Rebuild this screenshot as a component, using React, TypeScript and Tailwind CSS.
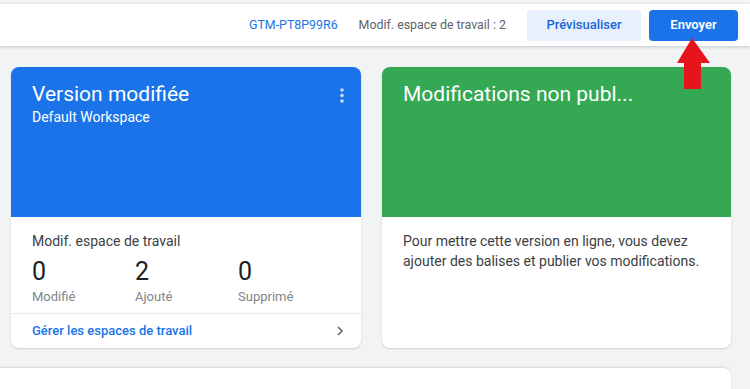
import React from "react";

export default function App() {
  return (
    <div
      className="relative w-[750px] h-[389px] overflow-hidden bg-[#f1f3f4] pt-[4px]"
      style={{ fontFamily: "Roboto, 'Open Sans', sans-serif" }}
    >
      {/* Header */}
      <div className="h-[42px] bg-white shadow-[0_1px_3px_rgba(60,64,67,0.25)] flex items-center justify-end pr-[12px]">
        <span className="text-[12.4px] text-[#1a73e8] mr-[21px]">GTM-PT8P99R6</span>
        <span className="text-[12.4px] text-[#5f6368] mr-[21px]">Modif. espace de travail : 2</span>
        <button className="w-[114px] h-[31px] rounded-[4px] bg-[#e8f0fe] text-[#1967d2] text-[13px] font-medium mr-[8px]">
          Prévisualiser
        </button>
        <button className="w-[89px] h-[31px] rounded-[4px] bg-[#1a73e8] text-white text-[13px] font-semibold">
          Envoyer
        </button>
      </div>

      {/* Cards */}
      <div className="flex gap-[21px] pl-[11px] mt-[21px]">
        <div className="w-[350px] h-[281px] rounded-[8px] bg-white shadow-[0_1px_2px_rgba(60,64,67,0.2)] overflow-hidden flex flex-col">
          <div className="h-[150px] bg-[#1a73e8] pl-[21px] pr-[10px] pt-[12px] text-white flex justify-between">
            <div>
              <div className="text-[21px] leading-[30px]">Version modifiée</div>
              <div className="text-[14px] leading-[16px]">Default Workspace</div>
            </div>
            <svg width="14" height="20" viewBox="0 0 14 20" className="mt-[7px]">
              <circle cx="5" cy="4" r="1.8" fill="#e8f0fe" opacity="0.85" />
              <circle cx="5" cy="9.5" r="1.8" fill="#e8f0fe" opacity="0.85" />
              <circle cx="5" cy="15" r="1.8" fill="#e8f0fe" opacity="0.85" />
            </svg>
          </div>
          <div className="flex-1 flex flex-col">
            <div className="pl-[21px] pt-[14px] flex-1">
              <div className="text-[14px] leading-[20px] text-[#3c4043]">Modif. espace de travail</div>
              <div className="flex mt-[6px]">
                {[
                  ["0", "Modifié"],
                  ["2", "Ajouté"],
                  ["0", "Supprimé"],
                ].map(([n, l], i) => (
                  <div key={i} className="w-[103px]">
                    <div className="text-[25px] leading-[30px] text-[#202124]">{n}</div>
                    <div className="text-[13px] leading-[18px] text-[#80868b] mt-[1px]">{l}</div>
                  </div>
                ))}
              </div>
            </div>
            <div className="h-[35px] border-t border-[#e8eaed] flex items-center justify-between pl-[21px] pr-[16px]">
              <span className="text-[13px] font-medium text-[#1a73e8]">Gérer les espaces de travail</span>
              <svg width="10" height="12" viewBox="0 0 10 12">
                <path d="M3 2 L7 6 L3 10" stroke="#5f6368" strokeWidth="1.5" fill="none" />
              </svg>
            </div>
          </div>
        </div>

        <div className="w-[349px] h-[281px] rounded-[8px] bg-white shadow-[0_1px_2px_rgba(60,64,67,0.2)] overflow-hidden flex flex-col">
          <div className="h-[150px] bg-[#34a853] pl-[21px] pt-[12px] text-white">
            <div className="text-[21px] leading-[30px]">Modifications non publ...</div>
          </div>
          <div className="pl-[21px] pr-[14px] pt-[14px] text-[14px] leading-[20px] text-[#3c4043]">
            Pour mettre cette version en ligne, vous devez ajouter des balises et publier vos modifications.
          </div>
        </div>
      </div>

      {/* Bottom card */}
      <div className="mt-[20px] w-[731px] h-[40px] bg-white rounded-tr-[8px] shadow-[0_-1px_2px_rgba(60,64,67,0.15)]" />

      {/* Red arrow */}
      <svg className="absolute left-[676px] top-[38px]" width="36" height="54" viewBox="0 0 36 54">
        <polygon points="16,0 34,25 25,25 25,51 8,51 8,25 1,25" fill="#e8141b" />
      </svg>
    </div>
  );
}
